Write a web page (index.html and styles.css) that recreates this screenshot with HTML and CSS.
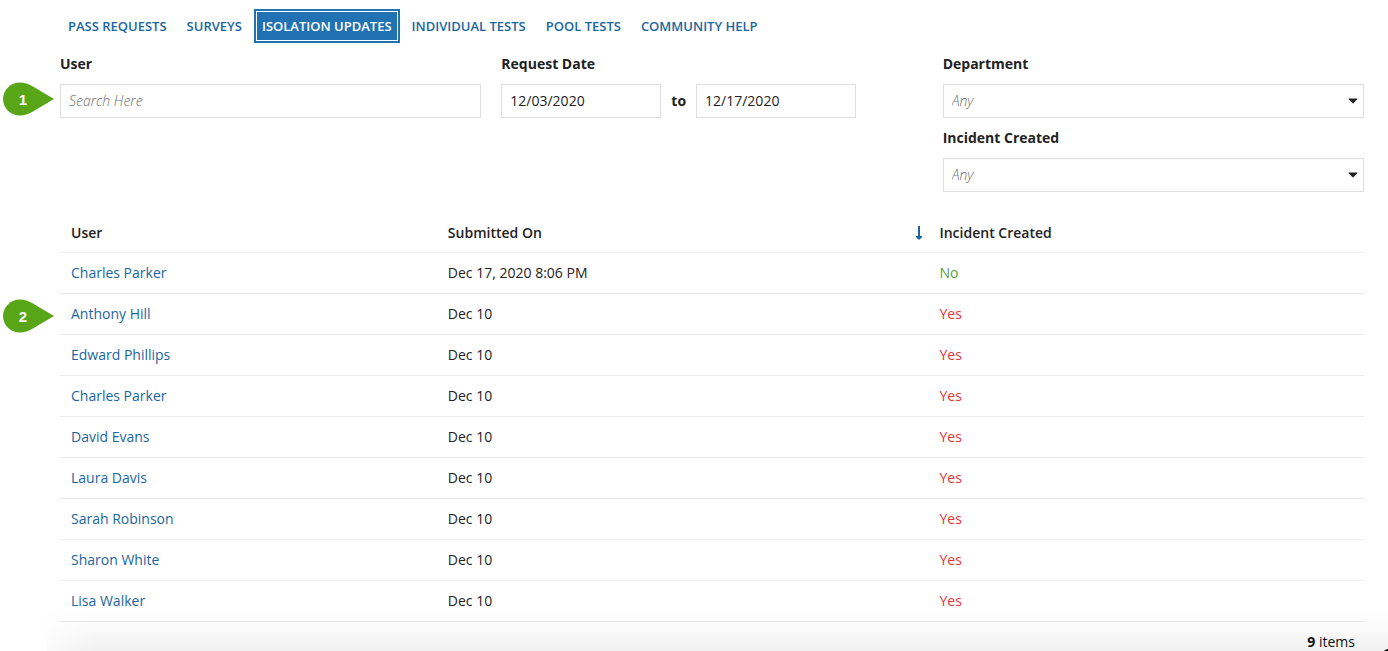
FILE: index.html
```html
<!DOCTYPE html>
<html lang="en">
<head>
<meta charset="utf-8">
<meta name="viewport" content="width=device-width, initial-scale=1">
<title>Isolation Updates</title>
<link rel="stylesheet" href="styles.css">
</head>
<body>
<main class="page">
  <nav class="tabs" aria-label="Reports">
    <button class="tab" type="button">PASS REQUESTS</button>
    <button class="tab" type="button">SURVEYS</button>
    <button class="tab tab-active" type="button" aria-current="page">ISOLATION UPDATES</button>
    <button class="tab" type="button">INDIVIDUAL TESTS</button>
    <button class="tab" type="button">POOL TESTS</button>
    <button class="tab" type="button">COMMUNITY HELP</button>
  </nav>

  <form class="filters">
    <div class="filter-column">
      <label class="label" for="user">User</label>
      <div class="control">
        <input class="input" id="user" type="text" placeholder="Search Here">
        <span class="marker">
          <svg class="marker-shape" viewBox="0 0 51 34" aria-hidden="true"><path d="M17 .4C7.600.4 0 7.900 0 17s7.600 16.600 17 16.600c4.500 0 8.500-1.500 12.500-3.800L51 17 29.500 4.200C25.500 1.900 21.500.4 17 .4z"/></svg>
          <span class="marker-number">1</span>
        </span>
      </div>
    </div>
    <div class="filter-column">
      <label class="label" for="date-from">Request Date</label>
      <div class="date-range">
        <input class="input input-date" id="date-from" type="text" value="12/03/2020">
        <label class="to" for="date-to">to</label>
        <input class="input input-date" id="date-to" type="text" value="12/17/2020">
      </div>
    </div>
    <div class="filter-column">
      <label class="label" for="department">Department</label>
      <div class="control">
        <select class="input select" id="department"><option>Any</option></select>
        <svg class="caret" viewBox="0 0 10 6" aria-hidden="true"><path d="M1 .5h8q.8 0 .3.700L5.600 5.100q-.6.600-1.200 0L.7 1.200Q.2.500 1 .5z"/></svg>
      </div>
      <label class="label" for="incident">Incident Created</label>
      <div class="control">
        <select class="input select" id="incident"><option>Any</option></select>
        <svg class="caret" viewBox="0 0 10 6" aria-hidden="true"><path d="M1 .5h8q.8 0 .3.700L5.600 5.100q-.6.600-1.200 0L.7 1.200Q.2.500 1 .5z"/></svg>
      </div>
    </div>
  </form>

  <table class="grid">
    <colgroup><col class="col-user"><col class="col-date"><col></colgroup>
    <thead>
      <tr>
        <th scope="col">User</th>
        <th scope="col" aria-sort="descending"><div class="sorted">Submitted On<svg class="sort-icon" viewBox="0 0 6 14" aria-hidden="true"><path d="M2 0h2v10h2v1.200L4.200 13q-1.200 1-2.400 0L0 11.200V10h2z"/></svg></div></th>
        <th scope="col">Incident Created</th>
      </tr>
    </thead>
    <tbody>
      <tr><td><a class="link" href="#">Charles Parker</a></td><td>Dec 17, 2020 8:06 PM</td><td class="no">No</td></tr>
      <tr>
        <td class="marked"><a class="link" href="#">Anthony Hill</a>
          <span class="marker marker-row">
            <svg class="marker-shape" viewBox="0 0 51 34" aria-hidden="true"><path d="M17 .4C7.600.4 0 7.900 0 17s7.600 16.600 17 16.600c4.500 0 8.500-1.500 12.500-3.800L51 17 29.500 4.200C25.500 1.900 21.500.4 17 .4z"/></svg>
            <span class="marker-number">2</span>
          </span>
        </td>
        <td>Dec 10</td><td class="yes">Yes</td>
      </tr>
      <tr><td><a class="link" href="#">Edward Phillips</a></td><td>Dec 10</td><td class="yes">Yes</td></tr>
      <tr><td><a class="link" href="#">Charles Parker</a></td><td>Dec 10</td><td class="yes">Yes</td></tr>
      <tr><td><a class="link" href="#">David Evans</a></td><td>Dec 10</td><td class="yes">Yes</td></tr>
      <tr><td><a class="link" href="#">Laura Davis</a></td><td>Dec 10</td><td class="yes">Yes</td></tr>
      <tr><td><a class="link" href="#">Sarah Robinson</a></td><td>Dec 10</td><td class="yes">Yes</td></tr>
      <tr><td><a class="link" href="#">Sharon White</a></td><td>Dec 10</td><td class="yes">Yes</td></tr>
      <tr><td><a class="link" href="#">Lisa Walker</a></td><td>Dec 10</td><td class="yes">Yes</td></tr>
    </tbody>
  </table>
  <footer class="summary"><strong>9</strong> items</footer>
</main>
<div class="bottom-shade"><svg class="corner" viewBox="0 0 4 2" aria-hidden="true"><path d="M0 2Q2 .2 4 0v2z"/></svg></div>
</body>
</html>
```

FILE: styles.css
```css
* {
  box-sizing: border-box;
}

body {
  margin: 0;
  background: #fff;
  color: #222;
  font: 14px/20px "Open Sans", "Noto Sans", sans-serif;
}

.page {
  padding: 9px 24px 0 60px;
}

.tabs {
  display: flex;
  gap: 4px;
}

.tab {
  height: 34px;
  padding: 0 8px;
  border: 0;
  background: none;
  color: #1b66a0;
  font: inherit;
  font-size: 13px;
  font-weight: 600;
  white-space: nowrap;
}

.tab-active {
  background: #2172b3;
  color: #fff;
  outline: 1px solid #fff;
  outline-offset: -3px;
}

.filters {
  display: grid;
  grid-template-columns: repeat(3, minmax(0, 1fr));
  gap: 20px;
}

.label {
  display: block;
  padding: 11px 0 10px;
  line-height: 20px;
  font-weight: 700;
}

.filter-column .control + .label {
  padding-top: 10px;
}

.control {
  position: relative;
}

.input {
  display: block;
  width: 100%;
  height: 34px;
  padding: 0 8px 1px;
  border: 1px solid #dedede;
  border-radius: 0;
  background: #fff;
  color: #222;
  font: inherit;
}

.input::placeholder {
  color: #6c6c6c;
  font-style: italic;
  font-weight: 300;
  opacity: 1;
}

.date-range {
  display: flex;
  align-items: center;
  gap: 10px;
}

.input-date {
  width: 160px;
}

.to {
  font-weight: 700;
}

.select {
  appearance: none;
  padding-bottom: 0;
  color: #6c6c6c;
  font-style: italic;
  font-weight: 300;
}

.caret {
  position: absolute;
  top: 14px;
  right: 6px;
  width: 10px;
  height: 6px;
  fill: #222;
  pointer-events: none;
}

.grid {
  width: 100%;
  margin-top: 20px;
  border-collapse: separate;
  border-spacing: 0;
  table-layout: fixed;
}

.col-user {
  width: 28.9%;
}

.col-date {
  width: 37.7%;
}

.grid th,
.grid td {
  height: 41px;
  padding: 0 11px;
  border-bottom: 1px solid #ebebeb;
  text-align: left;
}

.grid th {
  padding: 2px 6px 0 11px;
  font-weight: 600;
}

.sorted {
  display: flex;
  align-items: center;
  justify-content: space-between;
}

.sort-icon {
  width: 6px;
  height: 14px;
  fill: #1b66a0;
}

.link {
  color: #1b66a0;
  text-decoration: none;
}

.no {
  color: #5a9e36;
}

.yes {
  color: #e2353a;
}

.marked {
  position: relative;
}

.marker {
  position: absolute;
  top: 50%;
  left: -57px;
  display: grid;
  width: 51px;
  height: 34px;
  margin-top: -19px;
}

.marker-row {
  margin-top: -15px;
}

.marker-shape {
  grid-area: 1 / 1;
  width: 51px;
  height: 34px;
  fill: #58a618;
}

.marker-number {
  grid-area: 1 / 1;
  width: 40px;
  color: #fff;
  font: bold 15px/35px "Liberation Sans", Arial, sans-serif;
  text-align: center;
}

.summary {
  padding: 10px 9px 0;
  color: #111;
  text-align: right;
}

.bottom-shade {
  position: fixed;
  right: 0;
  bottom: 0;
  left: 47px;
  height: 42px;
  background:
    linear-gradient(90deg, rgba(255, 255, 255, .7), rgba(255, 255, 255, 0) 50px),
    linear-gradient(rgba(0, 0, 0, 0), rgba(0, 0, 0, .02) 50%, rgba(0, 0, 0, .06));
  pointer-events: none;
  mix-blend-mode: multiply;
}

.corner {
  position: absolute;
  right: 0;
  bottom: 0;
  width: 4px;
  height: 2px;
}
```
